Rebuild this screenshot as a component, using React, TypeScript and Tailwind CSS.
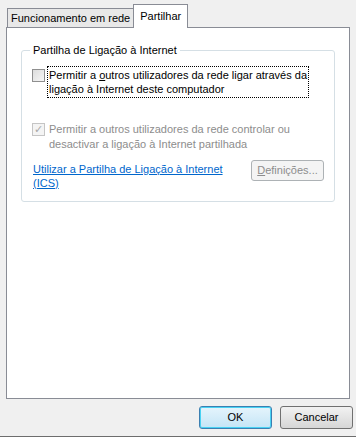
import { useState } from "react";

const font = { fontFamily: '"Liberation Sans", Arial, sans-serif' };

const App = () => {
  const [share, setShare] = useState(false);

  return (
    <div style={font} className="w-[356px] h-[437px] bg-[#f0f0f0] text-[11px] text-black flex flex-col border-b border-[#6d6d6d]">
      <div className="flex items-end pl-[7px] pt-[4px] h-[28px]">
        <div className="h-[20px] px-[3px] border border-b-0 border-[#898c95] bg-[#e8e8e8] flex items-center">
          Funcionamento em rede
        </div>
        <div className="h-[24px] px-[6px] border border-b-0 border-[#898c95] bg-white flex items-center -ml-px relative z-10">
          Partilhar
        </div>
      </div>

      <div className="mx-[6px] -mt-px h-[372px] border border-[#898c95] bg-white pt-[15px] px-[14px]">
        <fieldset className="border border-[#d5dfe5] rounded-[3px] px-[10px] pb-[11px]">
          <legend className="px-[3px] -ml-[2px] leading-[14px]">Partilha de Ligação à Internet</legend>

          <label className="flex items-start gap-[2px] mt-[9px]">
            <span
              onClick={() => setShare(!share)}
              className="mt-[3px] w-[13px] h-[13px] border border-[#8f8f8f] bg-gradient-to-br from-[#dcdcdc] to-[#f6f6f6] shrink-0 flex items-center justify-center text-[10px]"
            >
              {share ? "✓" : ""}
            </span>
            <span className="border border-dotted border-black px-[1px] py-[1px] leading-[14px] whitespace-nowrap">
              Permitir a <u>o</u>utros utilizadores da rede ligar através da
              <br />
              ligação à Internet deste computador
            </span>
          </label>

          <div className="flex items-start gap-[3px] mt-[24px] text-[#8d8d8d]">
            <span className="mt-[1px] w-[13px] h-[13px] border border-[#c5c5c5] bg-[#f4f4f4] shrink-0 flex items-center justify-center text-[#a9a9a9] text-[11px] leading-none">
              ✓
            </span>
            <span className="leading-[15px] px-[1px] whitespace-nowrap">
              Permitir a outros utilizadores da rede controlar ou
              <br />
              desactivar a ligação à Internet partilhada
            </span>
          </div>

          <div className="flex items-start justify-between mt-[10px]">
            <a className="text-[#0066cc] underline leading-[14px] pl-[1px]">
              Utilizar a Partilha de Ligação à Internet
              <br />
              (ICS)
            </a>
            <button
              disabled
              className="mt-[-2px] w-[73px] h-[21px] border border-[#adb2b5] rounded-[3px] bg-[#f4f4f4] text-[#8d8d8d]"
            >
              <u>D</u>efinições...
            </button>
          </div>
        </fieldset>
      </div>

      <div className="flex justify-end gap-[8px] pr-[3px] mt-[7px]">
        <button className="w-[73px] h-[23px] border border-[#3c7fb1] rounded-[3px] bg-gradient-to-b from-[#e5f4fc] to-[#c4e5f6] shadow-[inset_0_0_0_1px_#48d2f3]">
          OK
        </button>
        <button className="w-[73px] h-[23px] border border-[#707070] rounded-[3px] bg-gradient-to-b from-[#f2f2f2] to-[#d6d6d6]">
          Cancelar
        </button>
      </div>
    </div>
  );
};

export default App;
